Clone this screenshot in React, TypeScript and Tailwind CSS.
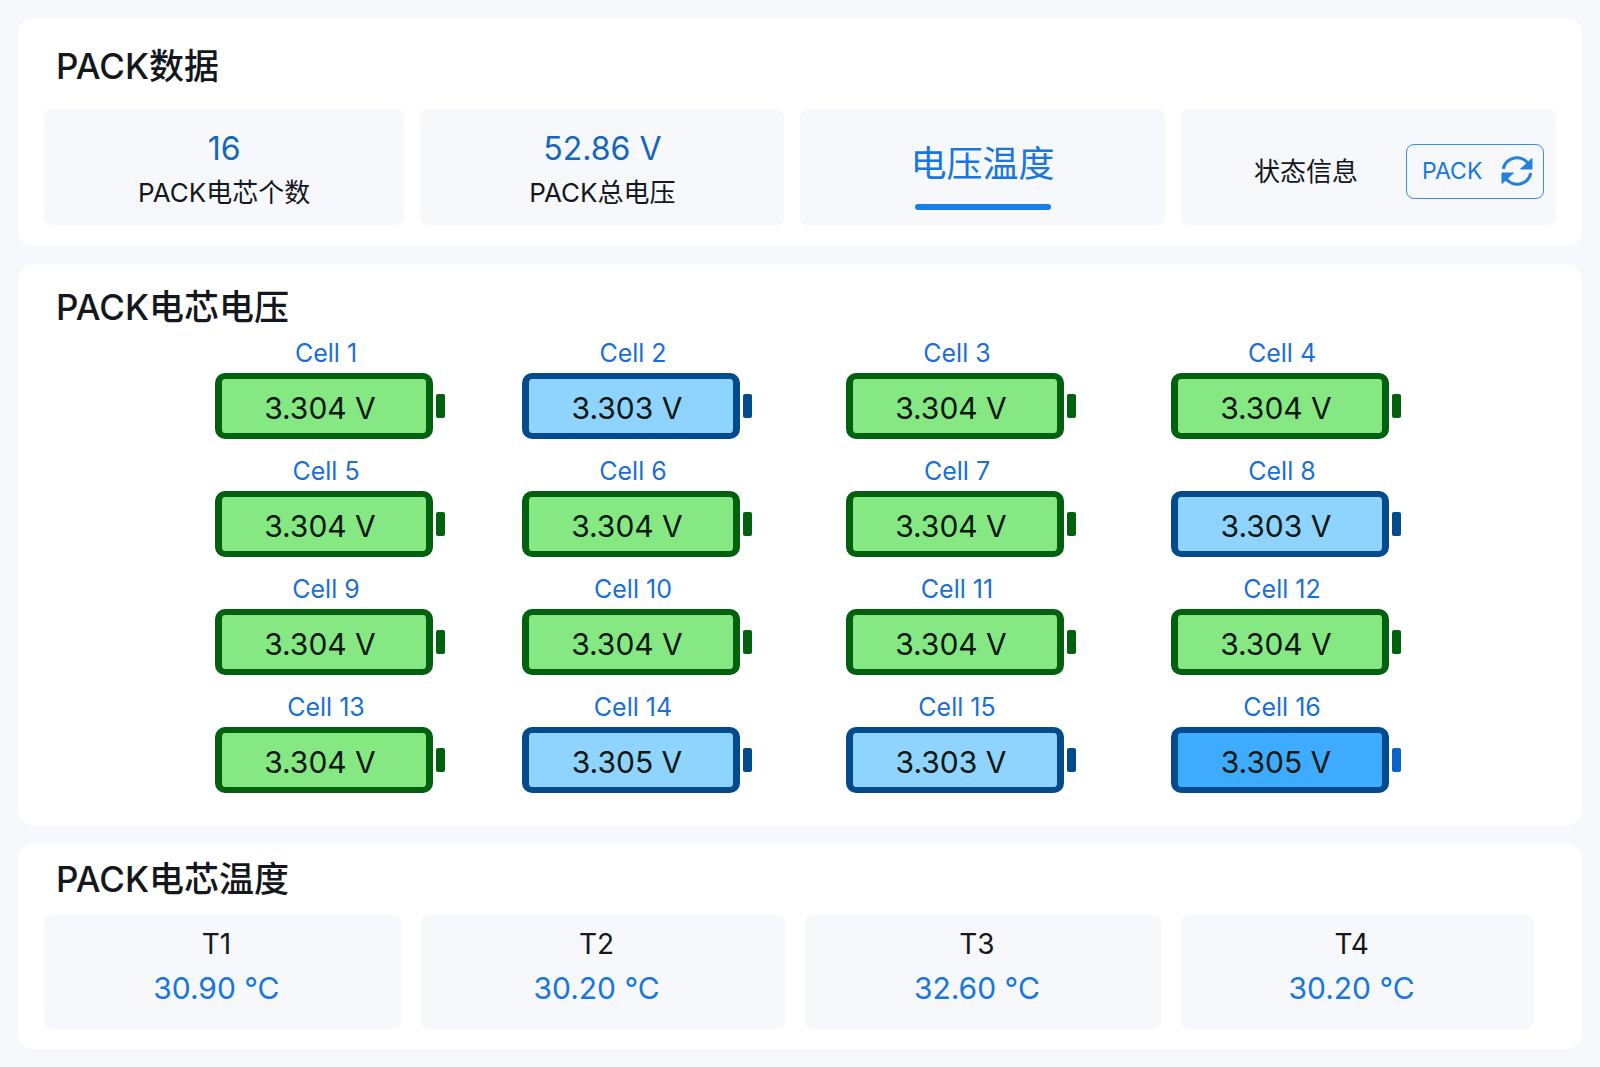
import React from "react";

type Tone = "green" | "blue" | "deep";

interface Cell {
  id: number;
  voltage: string;
  tone: Tone;
}

const cells: Cell[] = [
  { id: 1, voltage: "3.304 V", tone: "green" },
  { id: 2, voltage: "3.303 V", tone: "blue" },
  { id: 3, voltage: "3.304 V", tone: "green" },
  { id: 4, voltage: "3.304 V", tone: "green" },
  { id: 5, voltage: "3.304 V", tone: "green" },
  { id: 6, voltage: "3.304 V", tone: "green" },
  { id: 7, voltage: "3.304 V", tone: "green" },
  { id: 8, voltage: "3.303 V", tone: "blue" },
  { id: 9, voltage: "3.304 V", tone: "green" },
  { id: 10, voltage: "3.304 V", tone: "green" },
  { id: 11, voltage: "3.304 V", tone: "green" },
  { id: 12, voltage: "3.304 V", tone: "green" },
  { id: 13, voltage: "3.304 V", tone: "green" },
  { id: 14, voltage: "3.305 V", tone: "blue" },
  { id: 15, voltage: "3.303 V", tone: "blue" },
  { id: 16, voltage: "3.305 V", tone: "deep" },
];

const temps = [
  { name: "T1", value: "30.90 °C" },
  { name: "T2", value: "30.20 °C" },
  { name: "T3", value: "32.60 °C" },
  { name: "T4", value: "30.20 °C" },
];

const bodyTone: Record<Tone, string> = {
  green: "border-[#02610f] bg-[#86e883]",
  blue: "border-[#034b8c] bg-[#8fd3ff]",
  deep: "border-[#034b8c] bg-[#3eabff]",
};

const capTone: Record<Tone, string> = {
  green: "bg-[#02610f]",
  blue: "bg-[#034b8c]",
  deep: "bg-[#0864c8]",
};

const RefreshIcon = () => (
  <svg className="size-8" viewBox="0 0 32 32" fill="none" aria-hidden="true">
    <path d="M2.2 13.8A14 14 0 0 1 27.5 9" stroke="#2381df" strokeWidth="3.2" />
    <path d="M29.8 18.2A14 14 0 0 1 4.5 23" stroke="#2381df" strokeWidth="3.2" />
    <path d="M31 3.5v10.5H19.5z" fill="#2381df" stroke="#2381df" strokeLinejoin="round" />
    <path d="M1 28.5V18h11.5z" fill="#2381df" stroke="#2381df" strokeLinejoin="round" />
  </svg>
);

const Battery = ({ cell }: { cell: Cell }) => (
  <div>
    <div className="w-[218px] h-10 pl-1 leading-10 text-center text-[25px] text-[#1a6fd6]">
      Cell {cell.id}
    </div>
    <div className="flex items-center gap-[3px]">
      <div
        className={`w-[218px] h-[66px] pr-2 pt-1 flex items-center justify-center rounded-[10px] border-x-[7px] border-y-[6px] text-[30px] text-[#08170f] ${bodyTone[cell.tone]}`}
      >
        {cell.voltage}
      </div>
      <div className={`w-[9px] h-6 rounded-[2px] ${capTone[cell.tone]}`} />
    </div>
  </div>
);

const App: React.FC = () => {
  return (
    <main className="min-h-screen bg-[#f6f8fc] p-[18px] space-y-[18px] font-['Inter','Noto_Sans_CJK_SC',sans-serif] text-[#14171c]">
      <section className="bg-white rounded-2xl px-[26px] pt-6 pb-[21px]">
        <h1 className="px-3 mb-[19px] h-12 leading-[48px] text-[35px] font-medium">PACK数据</h1>
        <div className="grid grid-cols-[360fr_364fr_364fr_375fr] gap-4">
          <div className="h-[116px] pt-2 flex flex-col items-center justify-center rounded-lg bg-[#f6f8fb]">
            <span className="leading-[44px] text-[32px] text-[#1467bd]">16</span>
            <span className="leading-[44px] text-[26px]">PACK电芯个数</span>
          </div>
          <div className="h-[116px] pt-2 flex flex-col items-center justify-center rounded-lg bg-[#f6f8fb]">
            <span className="leading-[44px] text-[32px] text-[#1467bd]">52.86 V</span>
            <span className="leading-[44px] text-[26px]">PACK总电压</span>
          </div>
          <button className="h-[116px] pt-4 flex flex-col items-center justify-center rounded-lg bg-[#f6f8fb]">
            <span className="leading-[48px] text-4xl text-[#1876dc]">电压温度</span>
            <span className="mt-4 w-[136px] h-[6px] rounded-full bg-[#187de6]" />
          </button>
          <div className="h-[116px] pt-2 pr-3 flex items-center justify-end gap-12 rounded-lg bg-[#f6f8fb]">
            <span className="text-[26px]">状态信息</span>
            <button className="h-[55px] w-[138px] pr-[10px] pl-[15px] flex items-center justify-between rounded-lg border border-[#3b8de0] text-[23px] text-[#1876dc]">
              PACK
              <RefreshIcon />
            </button>
          </div>
        </div>
      </section>

      <section className="bg-white rounded-2xl px-[26px] pt-[19px] pb-[33px]">
        <h2 className="px-3 mb-0.5 h-12 leading-[48px] text-[35px] font-medium">PACK电芯电压</h2>
        <div className="pl-[171px] pr-[155px] grid grid-cols-[307fr_324fr_325fr_230fr] gap-y-3">
          {cells.map((cell) => (
            <Battery key={cell.id} cell={cell} />
          ))}
        </div>
      </section>

      <section className="bg-white rounded-2xl px-[26px] pt-[11px] pb-5">
        <h2 className="px-3 mb-3 h-12 leading-[48px] text-[35px] font-medium">PACK电芯温度</h2>
        <div className="pr-[22px] grid grid-cols-[356fr_363fr_356fr_352fr] gap-5">
          {temps.map((temp) => (
            <div
              key={temp.name}
              className="h-[114px] pb-3 pr-3 flex flex-col items-center justify-center rounded-lg bg-[#f6f8fb]"
            >
              <span className="leading-[44px] text-[28px]">{temp.name}</span>
              <span className="leading-[44px] text-[30px] text-[#1876dc]">{temp.value}</span>
            </div>
          ))}
        </div>
      </section>
    </main>
  );
};

export default App;
